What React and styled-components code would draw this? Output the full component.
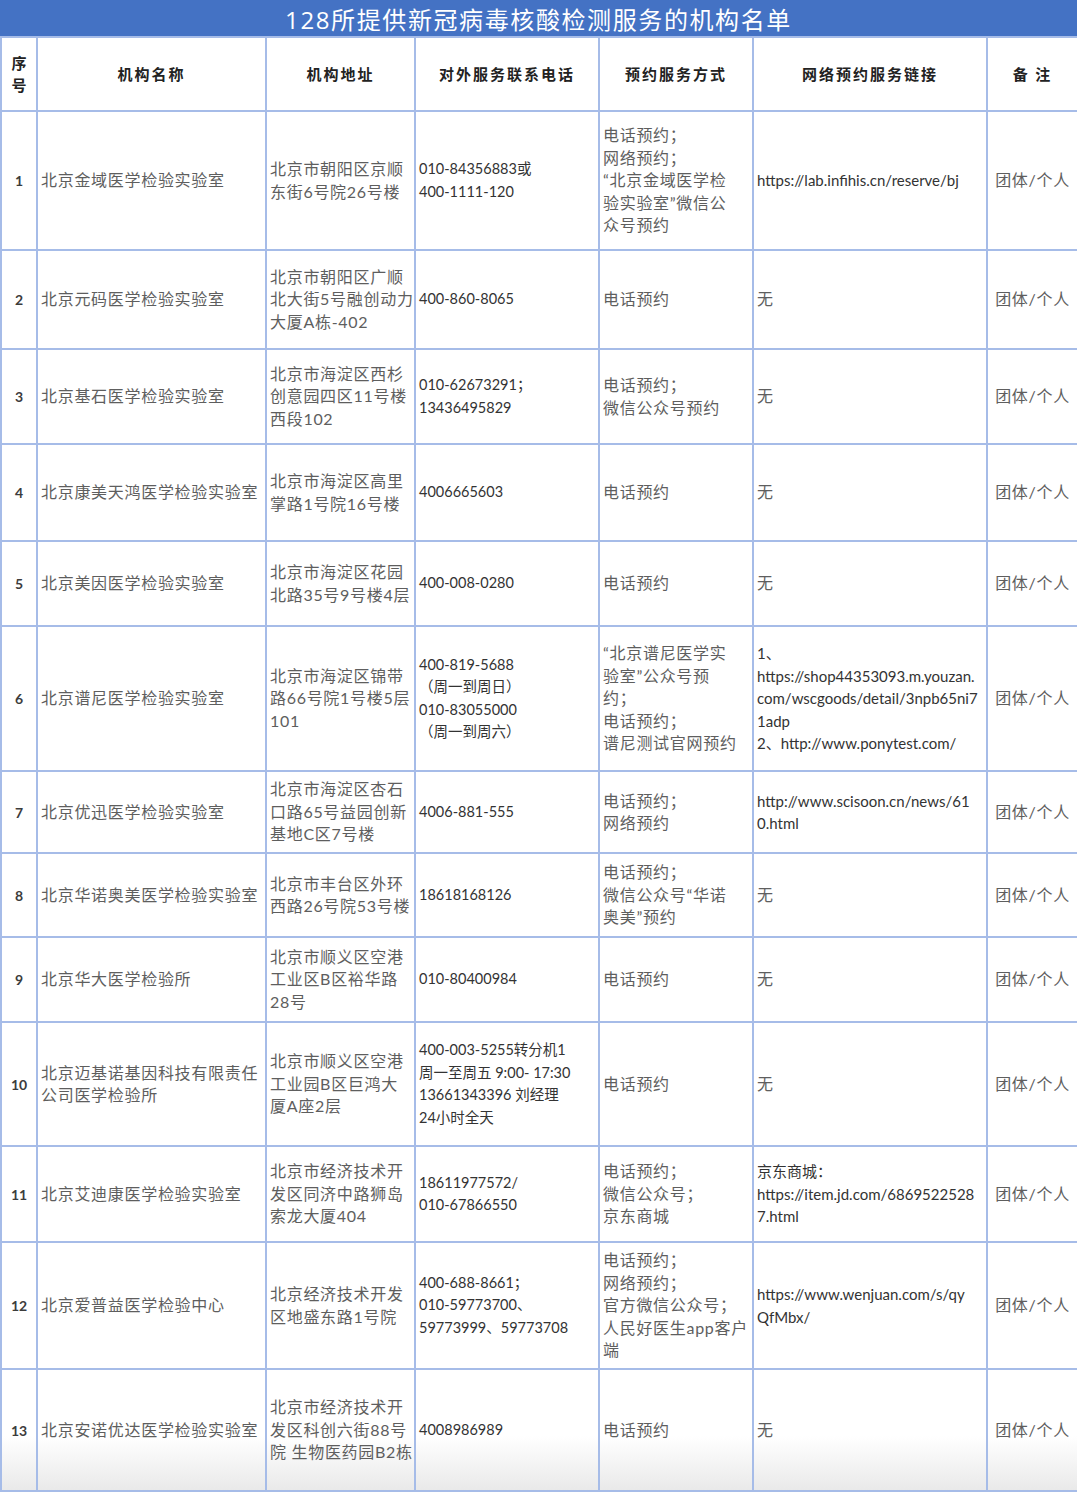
import React from 'react';
import styled, { createGlobalStyle } from 'styled-components';

const GlobalStyle = createGlobalStyle`
  html, body {
    margin: 0;
    padding: 0;
    background: #ffffff;
  }
  body {
    font-family: Lato, "Noto Sans CJK SC", sans-serif;
  }
`;

const Page = styled.div`
  width: 1077px;
  height: 1493px;
  overflow: hidden;
  background: #ffffff;
`;

const TitleBar = styled.div`
  height: 36px;
  display: flex;
  align-items: center;
  justify-content: center;
  background: #4472c4;
  color: #ffffff;
  font-family: "Open Sans", "Noto Sans CJK SC", sans-serif;
  font-size: 24px;
  letter-spacing: 1.6px;
`;

const Table = styled.table`
  width: 1077px;
  table-layout: fixed;
  border-collapse: collapse;
  border-spacing: 0;
`;

const Row = styled.tr`
  height: ${props => props.h}px;
  background: ${props =>
    props.last ? 'linear-gradient(#ffffff 55%, #e9e9e9 100%)' : '#ffffff'};
`;

const HeadCell = styled.th`
  border: 2px solid #a6bce8;
  padding: ${props => (props.narrow ? '0' : '0 4px')};
  font-family: "Noto Sans CJK SC", serif;
  font-size: 15px;
  font-weight: 700;
  letter-spacing: ${props => (props.narrow ? '0' : '2px')};
  line-height: 22px;
  color: #222222;
  text-align: center;
  vertical-align: middle;
`;

const Cell = styled.td`
  border: 2px solid #a6bce8;
  padding: 0 3px;
  vertical-align: middle;
  white-space: nowrap;
  line-height: 22.5px;
  text-align: ${props => (props.center ? 'center' : 'left')};
  font-family: Lato, "Noto Sans CJK SC", sans-serif;
  font-size: ${props => (props.latin ? props.latin : '16px')};
  letter-spacing: ${props => (props.latin ? '0' : '0.7px')};
  color: ${props => (props.latin ? '#333333' : '#5e5e5e')};
`;

const SerialCell = styled.td`
  border: 2px solid #a6bce8;
  padding: 0;
  text-align: center;
  vertical-align: middle;
  font-family: Lato, sans-serif;
  font-size: 14px;
  font-weight: 700;
  color: #3c3c3c;
`;

const cols = [36, 229, 149, 184, 154, 234, 91];

const rows = [
  {
    h: 139,
    name: ['北京金域医学检验实验室'],
    addr: ['北京市朝阳区京顺', '东街6号院26号楼'],
    phone: ['010-84356883或', '400-1111-120'],
    way: ['电话预约；', '网络预约；', '“北京金域医学检', '验实验室”微信公', '众号预约'],
    link: ['https://lab.infihis.cn/reserve/bj'],
  },
  {
    h: 99,
    name: ['北京元码医学检验实验室'],
    addr: ['北京市朝阳区广顺', '北大街5号融创动力', '大厦A栋-402'],
    phone: ['400-860-8065'],
    way: ['电话预约'],
    link: ['无'],
  },
  {
    h: 95,
    name: ['北京基石医学检验实验室'],
    addr: ['北京市海淀区西杉', '创意园四区11号楼', '西段102'],
    phone: ['010-62673291；', '13436495829'],
    way: ['电话预约；', '微信公众号预约'],
    link: ['无'],
  },
  {
    h: 97,
    name: ['北京康美天鸿医学检验实验室'],
    addr: ['北京市海淀区高里', '掌路1号院16号楼'],
    phone: ['4006665603'],
    way: ['电话预约'],
    link: ['无'],
  },
  {
    h: 85,
    name: ['北京美因医学检验实验室'],
    addr: ['北京市海淀区花园', '北路35号9号楼4层'],
    phone: ['400-008-0280'],
    way: ['电话预约'],
    link: ['无'],
  },
  {
    h: 145,
    name: ['北京谱尼医学检验实验室'],
    addr: ['北京市海淀区锦带', '路66号院1号楼5层', '101'],
    phone: ['400-819-5688', '（周一到周日）', '010-83055000', '（周一到周六）'],
    way: ['“北京谱尼医学实', '验室”公众号预', '约；', '电话预约；', '谱尼测试官网预约'],
    link: [
      '1、',
      'https://shop44353093.m.youzan.',
      'com/wscgoods/detail/3npb65ni7',
      '1adp',
      '2、http://www.ponytest.com/',
    ],
  },
  {
    h: 82,
    name: ['北京优迅医学检验实验室'],
    addr: ['北京市海淀区杏石', '口路65号益园创新', '基地C区7号楼'],
    phone: ['4006-881-555'],
    way: ['电话预约；', '网络预约'],
    link: ['http://www.scisoon.cn/news/61', '0.html'],
  },
  {
    h: 84,
    name: ['北京华诺奥美医学检验实验室'],
    addr: ['北京市丰台区外环', '西路26号院53号楼'],
    phone: ['18618168126'],
    way: ['电话预约；', '微信公众号“华诺', '奥美”预约'],
    link: ['无'],
  },
  {
    h: 85,
    name: ['北京华大医学检验所'],
    addr: ['北京市顺义区空港', '工业区B区裕华路', '28号'],
    phone: ['010-80400984'],
    way: ['电话预约'],
    link: ['无'],
  },
  {
    h: 124,
    name: ['北京迈基诺基因科技有限责任', '公司医学检验所'],
    addr: ['北京市顺义区空港', '工业园B区巨鸿大', '厦A座2层'],
    phone: ['400-003-5255转分机1', '周一至周五 9:00- 17:30', '13661343396 刘经理', '24小时全天'],
    way: ['电话预约'],
    link: ['无'],
  },
  {
    h: 96,
    name: ['北京艾迪康医学检验实验室'],
    addr: ['北京市经济技术开', '发区同济中路狮岛', '索龙大厦404'],
    phone: ['18611977572/', '010-67866550'],
    way: ['电话预约；', '微信公众号；', '京东商城'],
    link: ['京东商城：', 'https://item.jd.com/6869522528', '7.html'],
  },
  {
    h: 127,
    name: ['北京爱普益医学检验中心'],
    addr: ['北京经济技术开发', '区地盛东路1号院'],
    phone: ['400-688-8661；', '010-59773700、', '59773999、59773708'],
    way: ['电话预约；', '网络预约；', '官方微信公众号；', '人民好医生app客户', '端'],
    link: ['https://www.wenjuan.com/s/qy', 'QfMbx/'],
  },
  {
    h: 122,
    name: ['北京安诺优达医学检验实验室'],
    addr: ['北京市经济技术开', '发区科创六街88号', '院 生物医药园B2栋'],
    phone: ['4008986989'],
    way: ['电话预约'],
    link: ['无'],
  },
];

const Lines = ({ items }) =>
  items.map((line, i) => (
    <React.Fragment key={i}>
      {i > 0 && <br />}
      {line}
    </React.Fragment>
  ));

export default function App() {
  return (
    <Page>
      <GlobalStyle />
      <TitleBar>128所提供新冠病毒核酸检测服务的机构名单</TitleBar>
      <Table>
        <colgroup>
          {cols.map((w, i) => (
            <col key={i} style={{ width: w }} />
          ))}
        </colgroup>
        <thead>
          <Row h={74}>
            <HeadCell narrow>
              序<br />号
            </HeadCell>
            <HeadCell>机构名称</HeadCell>
            <HeadCell>机构地址</HeadCell>
            <HeadCell>对外服务联系电话</HeadCell>
            <HeadCell>预约服务方式</HeadCell>
            <HeadCell>网络预约服务链接</HeadCell>
            <HeadCell>备 注</HeadCell>
          </Row>
        </thead>
        <tbody>
          {rows.map((r, i) => (
            <Row key={i} h={r.h} last={i === rows.length - 1}>
              <SerialCell>{i + 1}</SerialCell>
              <Cell>
                <Lines items={r.name} />
              </Cell>
              <Cell>
                <Lines items={r.addr} />
              </Cell>
              <Cell latin="14.5px">
                <Lines items={r.phone} />
              </Cell>
              <Cell>
                <Lines items={r.way} />
              </Cell>
              <Cell latin={r.link[0] !== '无' ? '15px' : undefined}>
                <Lines items={r.link} />
              </Cell>
              <Cell center>团体/个人</Cell>
            </Row>
          ))}
        </tbody>
      </Table>
    </Page>
  );
}
